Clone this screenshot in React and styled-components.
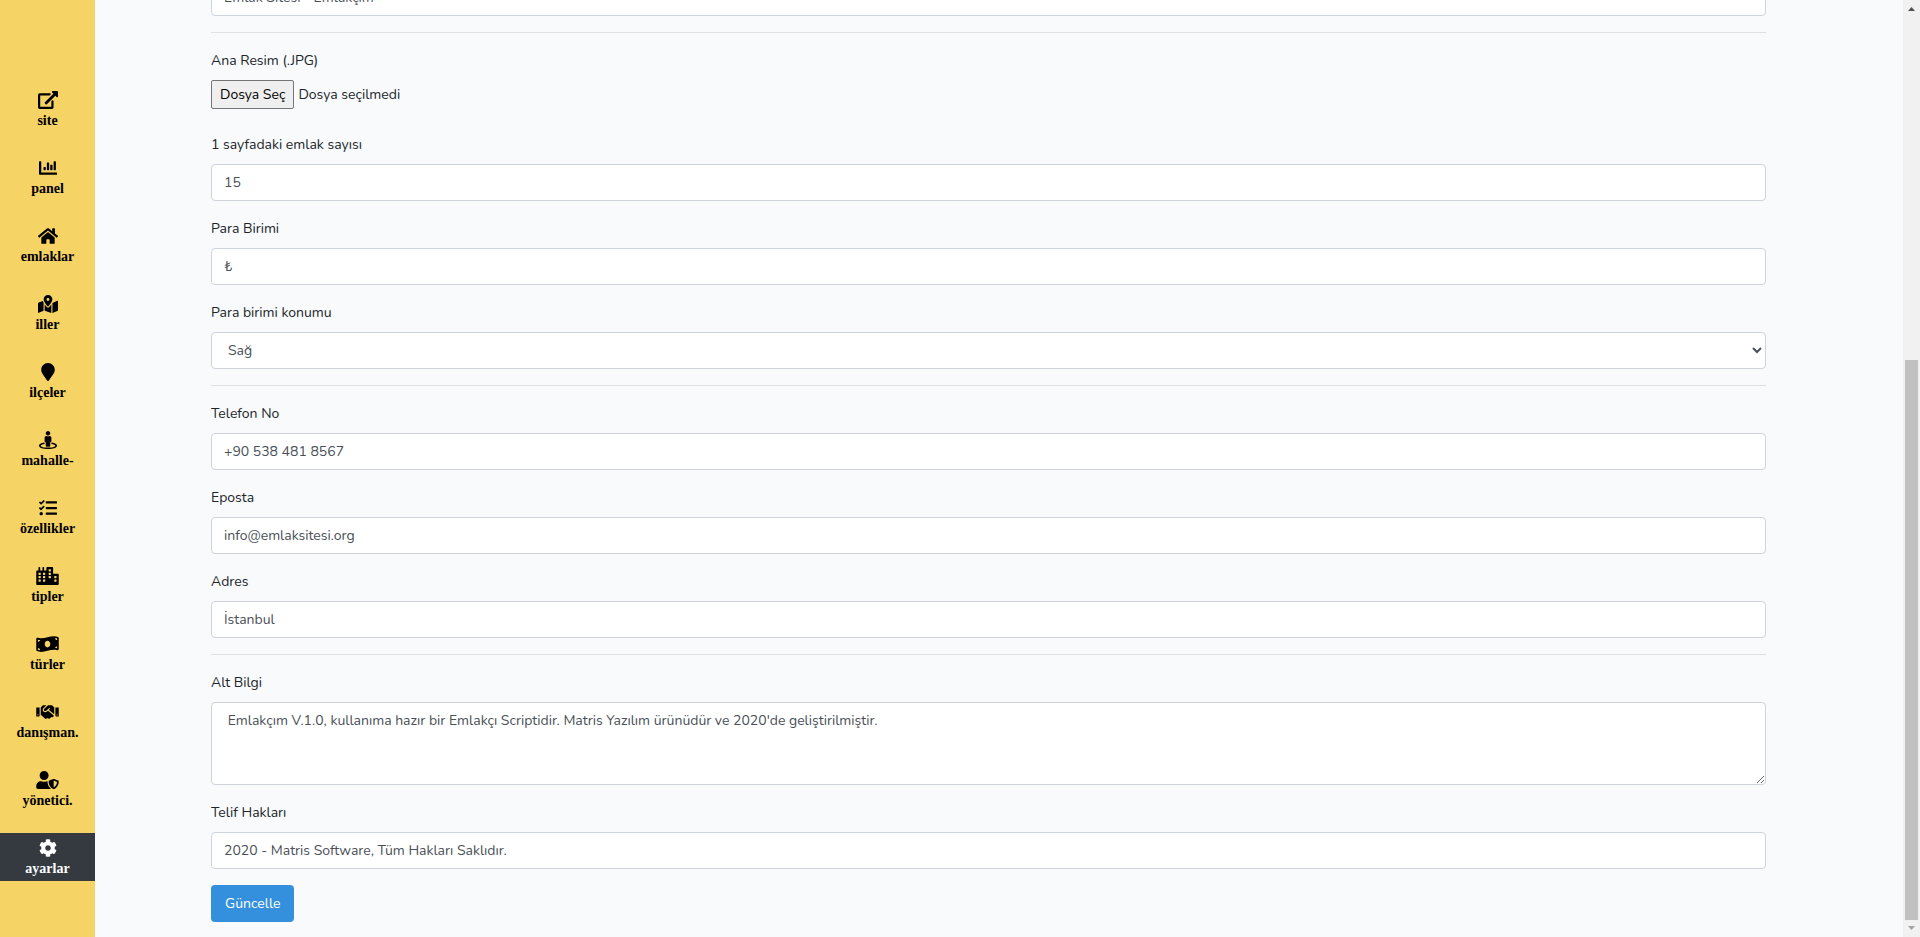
import React, { useRef, useState } from 'react';
import styled, { createGlobalStyle, css } from 'styled-components'
import {
    FaChartBar, FaHome, FaMapMarkedAlt, FaMapMarker, FaStreetView,
    FaTasks, FaCity, FaMoneyBillWave, FaHandshake, FaUserShield, FaCog
} from 'react-icons/fa'

const SiteIcon = () => (
    <svg viewBox="0 0 576 512" fill="currentColor">
        <path d="M576 24v127.984c0 21.461-25.96 31.98-40.971 16.971l-35.707-35.709-243.523 243.523c-9.373 9.373-24.568 9.373-33.941 0l-22.627-22.627c-9.373-9.373-9.373-24.569 0-33.941L442.756 76.676l-35.703-35.705C391.982 25.9 402.656 0 424.024 0H552c13.255 0 24 10.745 24 24zM407.029 270.794l-16 16A23.999 23.999 0 0 0 384 303.765V448H64V128h264a24.003 24.003 0 0 0 16.97-7.029l16-16C376.089 89.851 365.381 64 344 64H48C21.49 64 0 85.49 0 112v352c0 26.51 21.49 48 48 48h352c26.51 0 48-21.49 48-48V287.764c0-21.382-25.852-32.09-40.971-16.97z" />
    </svg>
)

const menu = [
    { name: 'site', icon: SiteIcon, width: 20 },
    { name: 'panel', icon: FaChartBar, width: 18 },
    { name: 'emlaklar', icon: FaHome, width: 20 },
    { name: 'iller', icon: FaMapMarkedAlt, width: 20 },
    { name: 'ilçeler', icon: FaMapMarker, width: 14 },
    { name: 'mahalle-', icon: FaStreetView, width: 18 },
    { name: 'özellikler', icon: FaTasks, width: 18 },
    { name: 'tipler', icon: FaCity, width: 23 },
    { name: 'türler', icon: FaMoneyBillWave, width: 23 },
    { name: 'danışman.', icon: FaHandshake, width: 23 },
    { name: 'yönetici.', icon: FaUserShield, width: 23 },
    { name: 'ayarlar', icon: FaCog, width: 18, active: true },
]

const TextField = ({ id, label, value, type = 'text' }) => {
    const [text, setText] = useState(value)

    return (
        <Group>
            <Label htmlFor={id}>{label}</Label>
            <Input id={id} name={id} type={type} value={text} onChange={e => setText(e.target.value)} />
        </Group>
    )
}

const FileField = ({ id, label }) => {
    const input = useRef(null)
    const [file, setFile] = useState('')

    return (
        <Group>
            <Label htmlFor={id}>{label}</Label>
            <FileRow>
                <FileButton type="button" onClick={() => input.current.click()}>Dosya Seç</FileButton>
                <span>{file || 'Dosya seçilmedi'}</span>
                <input
                id={id}
                ref={input}
                type="file"
                accept=".jpg"
                hidden
                onChange={e => setFile(e.target.files[0] ? e.target.files[0].name : '')} />
            </FileRow>
        </Group>
    )
}

const App = () => {
    const [title, setTitle] = useState('Emlak Sitesi - Emlakçım')
    const [position, setPosition] = useState('sag')
    const [footer, setFooter] = useState(" Emlakçım V.1.0, kullanıma hazır bir Emlakçı Scriptidir. Matris Yazılım ürünüdür ve 2020'de geliştirilmiştir.")

    return (
        <Page>
            <GlobalStyle />
            <Sidebar>
                {menu.map(({ name, icon: Icon, width, active }) => (
                    <MenuLink key={name} href="#" $iconWidth={width} $active={active}>
                        <Icon />
                        <span>{name}</span>
                    </MenuLink>
                ))}
            </Sidebar>
            <Content>
                <Form onSubmit={e => e.preventDefault()}>
                    <Input aria-label="Site Başlığı" name="title" value={title} onChange={e => setTitle(e.target.value)} />
                    <Divider />
                    <FileField id="image" label="Ana Resim (.JPG)" />
                    <TextField id="perPage" label="1 sayfadaki emlak sayısı" value="15" />
                    <TextField id="currency" label="Para Birimi" value="₺" />
                    <Group>
                        <Label htmlFor="position">Para birimi konumu</Label>
                        <Select id="position" value={position} onChange={e => setPosition(e.target.value)}>
                            <option value="sag">Sağ</option>
                            <option value="sol">Sol</option>
                        </Select>
                    </Group>
                    <Divider />
                    <TextField id="phone" label="Telefon No" value="+90 538 481 8567" />
                    <TextField id="email" label="Eposta" value="info@emlaksitesi.org" />
                    <TextField id="address" label="Adres" value="İstanbul" />
                    <Divider />
                    <Group>
                        <Label htmlFor="footer">Alt Bilgi</Label>
                        <TextArea id="footer" value={footer} onChange={e => setFooter(e.target.value)} />
                    </Group>
                    <TextField id="copyright" label="Telif Hakları" value="2020 - Matris Software, Tüm Hakları Saklıdır." />
                    <SubmitButton type="submit">Güncelle</SubmitButton>
                </Form>
            </Content>
            <ScrollTrack aria-hidden="true">
                <Arrow viewBox="0 0 17 17"><path d="M5 11h7L8.5 7z" fill="#505050" /></Arrow>
                <ScrollSpace $grow={343} />
                <ScrollThumb $grow={560} />
                <Arrow viewBox="0 0 17 17"><path d="M5 6h7L8.5 10z" fill="#a3a3a3" /></Arrow>
            </ScrollTrack>
        </Page>
    );
};

const GlobalStyle = createGlobalStyle`
* {
box-sizing: border-box;
}
body {
margin: 0;
background-color: #f8fafc;
color: #212529;
font-family: Nunito, Lato, sans-serif;
font-size: 14px;
line-height: 23px;
}
`;

const Page = styled.div`
display: flex;
height: 100vh;
overflow: hidden;
`;

const Sidebar = styled.nav`
display: flex;
flex-direction: column;
flex: none;
gap: 20px;
width: 95px;
padding-top: 85px;
background-color: #f6d365;
`;

const MenuLink = styled.a`
display: flex;
flex-direction: column;
align-items: center;
height: 48px;
padding-top: 6px;
color: #000;
font-family: "Liberation Serif", serif;
font-size: 14px;
font-weight: bold;
line-height: 24px;
text-decoration: none;
svg {
flex: none;
width: ${props => props.$iconWidth}px;
height: 18px;
}
${props => props.$active && css`
background-color: #343a40;
color: #fff;
`}
`;

const Content = styled.main`
display: flex;
flex: 1;
flex-direction: column;
justify-content: flex-end;
min-width: 0;
padding: 0 137px 15px 116px;
overflow: hidden;
`;

const Form = styled.form`
display: flex;
flex-direction: column;
gap: 16px;
`;

const Group = styled.div`
display: flex;
flex-direction: column;
gap: 8px;
`;

const Label = styled.label`
align-self: flex-start;
`;

const control = css`
width: 100%;
height: 37px;
padding: 6px 12px;
border: 1px solid #ced4da;
border-radius: 4px;
background-color: #fff;
color: #495057;
font: inherit;
`;

const Input = styled.input`
${control}
`;

const Select = styled.select`
${control}
`;

const TextArea = styled.textarea`
${control}
display: block;
height: 83px;
resize: vertical;
`;

const Divider = styled.hr`
width: 100%;
margin: 0;
border: 0;
border-top: 1px solid #dfe1e3;
`;

const FileRow = styled.div`
display: flex;
align-items: flex-start;
gap: 4px;
height: 37px;
line-height: 29px;
`;

const FileButton = styled.button`
height: 29px;
padding: 0 8px;
border: 1px solid #767676;
border-radius: 2px;
background-color: #efefef;
color: #000;
font: inherit;
line-height: 27px;
`;

const SubmitButton = styled.button`
align-self: flex-start;
height: 37px;
padding: 0 14px;
border: 0;
border-radius: 4px;
background-color: #3490dc;
color: #fff;
font: inherit;
cursor: pointer;
`;

const ScrollTrack = styled.div`
display: flex;
flex-direction: column;
flex: none;
width: 17px;
background-color: #f1f1f1;
`;

const Arrow = styled.svg`
flex: none;
width: 17px;
height: 17px;
`;

const ScrollSpace = styled.div`
flex: ${props => props.$grow};
`;

const ScrollThumb = styled(ScrollSpace)`
margin: 0 2px;
background-color: #c1c1c1;
`;

export default App;
